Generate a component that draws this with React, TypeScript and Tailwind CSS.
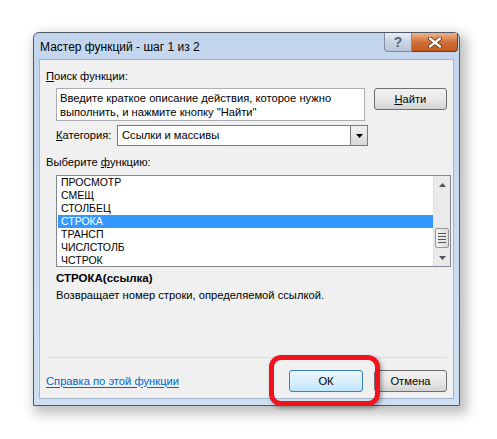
import { useState } from "react";

const functions = [
    "ПРОСМОТР",
    "СМЕЩ",
    "СТОЛБЕЦ",
    "СТРОКА",
    "ТРАНСП",
    "ЧИСЛСТОЛБ",
    "ЧСТРОК",
];

const btn =
    "h-[22px] rounded-[3px] border border-[#707070] bg-gradient-to-b from-[#f2f2f2] via-[#e9e9e9] to-[#d3d3d3] text-black flex items-center justify-center";

function ScrollArrow({ up }: { up?: boolean }) {
    return (
        <div className="h-[17px] flex items-center justify-center">
            <svg width="7" height="4" viewBox="0 0 7 4">
                <path
                    d={up ? "M0 4 L3.5 0 L7 4 Z" : "M0 0 L3.5 4 L7 0 Z"}
                    fill="#4d5360"
                />
            </svg>
        </div>
    );
}

export default function App() {
    const [selected, setSelected] = useState("СТРОКА");

    return (
        <div
            className="w-[497px] h-[439px] bg-white pt-[32px] pl-[33px] text-[11.2px] text-black"
            style={{ fontFamily: '"Liberation Sans", Arial, sans-serif' }}
        >
            {/* Window frame */}
            <div className="w-[427px] h-[374px] rounded-t-[6px] border border-[#4f5966] bg-gradient-to-b from-[#c3d6ee] to-[#cfdff2] shadow-[4px_5px_12px_3px_rgba(0,0,0,0.25)] flex flex-col">
                {/* Title bar */}
                <div className="h-[26px] flex items-start">
                    <div className="pl-[6px] pt-[7px] text-[12px] leading-[14px]">
                        Мастер функций - шаг 1 из 2
                    </div>
                    <div className="ml-auto mr-[1px] flex">
                        <div className="w-[28px] h-[19px] rounded-bl-[4px] border border-t-0 border-[#7f8ea3] bg-gradient-to-b from-[#e6edf6] via-[#c9d5e4] to-[#b6c4d6] flex items-center justify-center">
                            <span className="text-[14px] font-bold leading-none text-[#5a6473]">
                                ?
                            </span>
                        </div>
                        <div className="w-[46px] h-[19px] rounded-br-[4px] border border-l-0 border-t-0 border-[#6b3b25] bg-gradient-to-b from-[#eeb38a] via-[#d0713a] to-[#c15a1f] flex items-center justify-center">
                            <svg width="14" height="11" viewBox="0 0 14 11">
                                <path
                                    d="M2 1.5 L12 9.5 M12 1.5 L2 9.5"
                                    stroke="#5b2a10"
                                    strokeWidth="4"
                                    strokeLinecap="round"
                                />
                                <path
                                    d="M2 1.5 L12 9.5 M12 1.5 L2 9.5"
                                    stroke="#ffffff"
                                    strokeWidth="2.4"
                                    strokeLinecap="round"
                                />
                            </svg>
                        </div>
                    </div>
                </div>

                {/* Client area */}
                <div className="mx-[5px] mb-[6px] flex-1 border border-[#a3b5cb] bg-[#f0f0f0] flex flex-col pl-[6px] pr-[6px]">
                    <div className="mt-[9px] h-[14px] leading-[14px]">
                        <u>П</u>оиск функции:
                    </div>

                    <div className="mt-[5px] flex pl-[10px]">
                        <div className="w-[312px] h-[33px] border border-[#abadb3] bg-white px-[3px] pt-[2px] leading-[14px]">
                            Введите краткое описание действия, которое нужно
                            <br />
                            выполнить, и нажмите кнопку "Найти"
                        </div>
                        <button className={`${btn} ml-[9px] w-[74px]`}>
                            <u>Н</u>айти
                        </button>
                    </div>

                    <div className="mt-[4px] flex items-center pl-[10px]">
                        <span className="w-[61px]">
                            <u>К</u>атегория:
                        </span>
                        <div className="w-[251px] h-[21px] border border-[#7a7a7a] bg-white flex items-center">
                            <span className="flex-1 pl-[4px]">Ссылки и массивы</span>
                            <div className="w-[17px] h-[19px] border-l border-[#7a7a7a] bg-gradient-to-b from-[#f0f0f0] to-[#d8d8d8] flex items-center justify-center">
                                <svg width="7" height="4" viewBox="0 0 7 4">
                                    <path d="M0 0 L3.5 4 L7 0 Z" fill="#000" />
                                </svg>
                            </div>
                        </div>
                    </div>

                    <div className="mt-[9px] h-[14px] leading-[14px]">
                        Выберите <u>ф</u>ункцию:
                    </div>

                    <div className="mt-[6px] ml-[10px] w-[395px] h-[92px] border border-[#828790] bg-white flex">
                        <div className="flex-1 overflow-hidden pl-[1px] text-[10.5px]">
                            {functions.map((f) => (
                                <div
                                    key={f}
                                    onClick={() => setSelected(f)}
                                    className={
                                        f === selected
                                            ? "h-[13px] leading-[11px] pl-[2px] bg-[#3399ff] text-white border border-dotted border-[#c9742c]"
                                            : "h-[13px] leading-[11px] pl-[2px] border border-transparent"
                                    }
                                >
                                    {f}
                                </div>
                            ))}
                        </div>
                        <div className="w-[17px] bg-[#eaeaea] border-l border-[#e3e3e3] flex flex-col">
                            <ScrollArrow up />
                            <div className="flex-1 flex flex-col justify-end pb-[1px]">
                                <div className="mx-[1px] h-[20px] rounded-[2px] border border-[#969696] bg-gradient-to-r from-[#f3f3f3] to-[#dcdcdc] flex flex-col items-center justify-center gap-[2px]">
                                    <div className="w-[8px] h-[1px] bg-[#555]" />
                                    <div className="w-[8px] h-[1px] bg-[#555]" />
                                    <div className="w-[8px] h-[1px] bg-[#555]" />
                                    <div className="w-[8px] h-[1px] bg-[#555]" />
                                </div>
                            </div>
                            <ScrollArrow />
                        </div>
                    </div>

                    <div className="mt-[4px] ml-[10px] h-[14px] leading-[14px] font-bold text-[11.5px]">
                        СТРОКА(ссылка)
                    </div>
                    <div className="mt-[3px] ml-[10px] h-[14px] leading-[14px]">
                        Возвращает номер строки, определяемой ссылкой.
                    </div>

                    <div className="mt-auto border-t border-[#d3dce8]" />

                    <div className="mt-[12px] mb-[6px] flex items-center">
                        <a
                            href="#"
                            className="text-[#0066cc] underline underline-offset-[2px]"
                        >
                            Справка по этой функции
                        </a>
                        <div className="ml-auto relative">
                            <button className="h-[22px] w-[74px] rounded-[3px] border border-[#3c7fb1] bg-gradient-to-b from-[#eaf6fd] via-[#dbeefb] to-[#bee6fd] flex items-center justify-center">
                                ОК
                            </button>
                            {/* red highlight */}
                            <div className="absolute -left-[20px] -right-[17px] -top-[15px] -bottom-[14px] rounded-[12px] border-[5px] border-[#f2121b] shadow-[2px_2px_4px_rgba(0,0,0,0.35)] pointer-events-none" />
                        </div>
                        <button className={`${btn} ml-[11px] w-[73px]`}>Отмена</button>
                    </div>
                </div>
            </div>
        </div>
    );
}
